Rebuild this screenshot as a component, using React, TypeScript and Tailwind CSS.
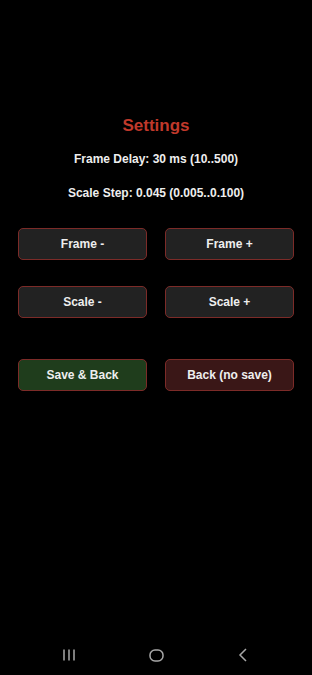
const font = { fontFamily: '"Liberation Sans", Arial, sans-serif' };

type BtnProps = { label: string; tone?: "plain" | "save" | "back" };

function Btn({ label, tone = "plain" }: BtnProps) {
  const bg =
    tone === "save" ? "bg-[#1f3d1c]" : tone === "back" ? "bg-[#3a1717]" : "bg-[#222222]";
  return (
    <button
      className={`${bg} h-[32px] w-[129px] rounded-[5px] border-[1.5px] border-[#7c2b28] text-[12px] font-bold text-[#eeeeee] flex items-center justify-center`}
    >
      {label}
    </button>
  );
}

export default function App() {
  return (
    <div className="w-[312px] h-[675px] bg-black flex flex-col" style={font}>
      <div className="flex-1 flex flex-col items-center pt-[114px]">
        <h1 className="text-[17px] leading-[24px] font-bold text-[#c0392b]">Settings</h1>
        <p className="mt-[13px] text-[12px] leading-[16px] font-bold text-[#eeeeee]">
          Frame Delay: 30 ms (10..500)
        </p>
        <p className="mt-[18px] text-[12px] leading-[16px] font-bold text-[#eeeeee]">
          Scale Step: 0.045 (0.005..0.100)
        </p>

        <div className="mt-[27px] w-full px-[18px] flex flex-col">
          <div className="flex justify-between">
            <Btn label="Frame -" />
            <Btn label="Frame +" />
          </div>
          <div className="mt-[26px] flex justify-between">
            <Btn label="Scale -" />
            <Btn label="Scale +" />
          </div>
          <div className="mt-[41px] flex justify-between">
            <Btn label="Save & Back" tone="save" />
            <Btn label="Back (no save)" tone="back" />
          </div>
        </div>
      </div>

      {/* system nav bar */}
      <div className="h-[40px] flex items-center justify-center">
        <div className="w-[87px] flex justify-center">
          <svg width="14" height="12" viewBox="0 0 14 12" fill="none" stroke="#a8a8a8" strokeWidth="1.5">
            <path d="M2 0.5v11M7 0.5v11M12 0.5v11" />
          </svg>
        </div>
        <div className="w-[87px] flex justify-center">
          <svg width="15" height="13" viewBox="0 0 15 13" fill="none" stroke="#a8a8a8" strokeWidth="1.5">
            <rect x="1" y="1" width="13" height="11" rx="5" />
          </svg>
        </div>
        <div className="w-[87px] flex justify-center">
          <svg width="10" height="14" viewBox="0 0 10 14" fill="none" stroke="#a8a8a8" strokeWidth="1.5">
            <path d="M8 1L2 7l6 6" />
          </svg>
        </div>
      </div>
    </div>
  );
}
